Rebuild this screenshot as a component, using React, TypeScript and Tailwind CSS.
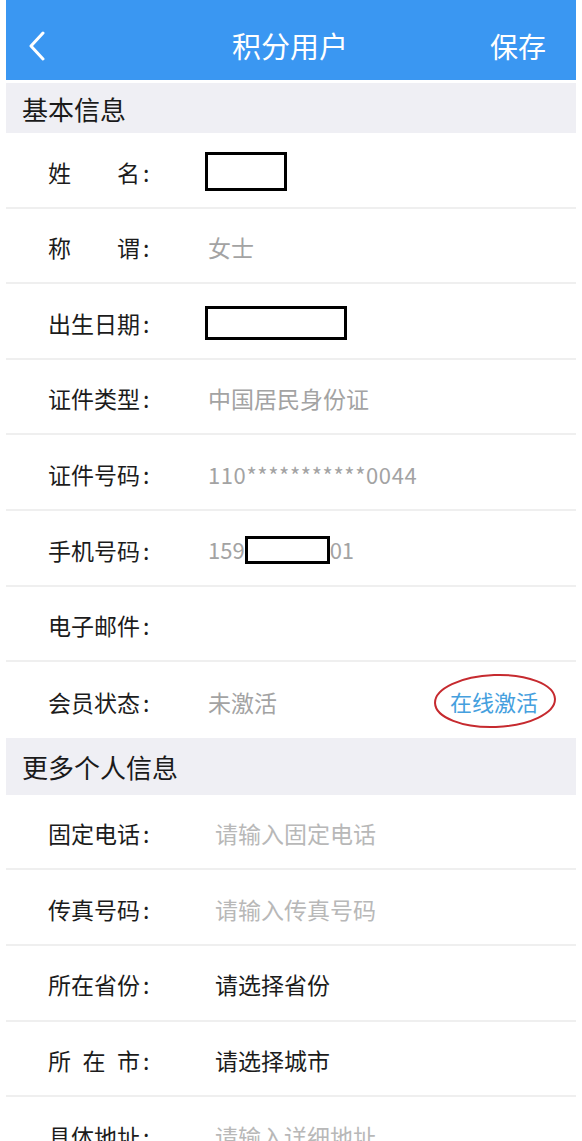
import type { ReactNode } from "react";

const FONT = {
  fontFamily: '"Noto Sans CJK SC", "Noto Sans", sans-serif',
};

function Label({ chars }: { chars: string[] }) {
  return (
    <div className="flex items-center text-[23px] text-[#1c1c1c]">
      <span className="flex w-[92px] justify-between">
        {chars.map((c, i) => (
          <span key={i}>{c}</span>
        ))}
      </span>
      <span className="ml-[3px]">:</span>
    </div>
  );
}

interface RowProps {
  chars: string[];
  valueLeft: string;
  children?: ReactNode;
  last?: boolean;
}

function Row({ chars, valueLeft, children, last = false }: RowProps) {
  return (
    <div
      className={`flex h-[75.6px] items-center pl-[42px] pt-[4px] ${
        last ? "" : "border-b-2 border-[#efefef]"
      }`}
    >
      <div className={valueLeft}>
        <Label chars={chars} />
      </div>
      <div className="flex flex-1 items-center">{children}</div>
    </div>
  );
}

function SectionTitle({ children, h }: { children: ReactNode; h: string }) {
  return (
    <div className={`flex items-center bg-[#efeff4] pl-[16px] text-[26px] text-[#1a1a1a] ${h}`}>
      {children}
    </div>
  );
}

function Redacted({ w, h }: { w: string; h: string }) {
  return <span className={`inline-block border-[3px] border-black bg-white ${w} ${h}`} />;
}

export default function App() {
  return (
    <div className="h-[1141px] overflow-hidden bg-white px-[6px]" style={FONT}>
      {/* nav bar */}
      <header className="flex h-[80px] items-center justify-between bg-[#3a97f2] pl-[22px] pr-[30px] pt-[12px] text-white">
        <svg width="18" height="30" viewBox="0 0 18 30">
          <path
            d="M15 2 L3 15 L15 28"
            fill="none"
            stroke="white"
            strokeWidth="3"
            strokeLinecap="round"
            strokeLinejoin="round"
          />
        </svg>
        <h1 className="ml-[44px] text-[29px] font-normal">积分用户</h1>
        <button className="text-[28px]">保存</button>
      </header>

      <div className="mt-[3px]">
        <SectionTitle h="h-[50px]">基本信息</SectionTitle>
        <Row chars={["姓", "名"]} valueLeft="w-[157px]">
          <Redacted w="w-[82px]" h="h-[39px]" />
        </Row>
        <Row chars={["称", "谓"]} valueLeft="w-[157px]">
          <span className="ml-[3px] text-[23px] text-[#a3a3a3]">女士</span>
        </Row>
        <Row chars={["出", "生", "日", "期"]} valueLeft="w-[157px]">
          <Redacted w="w-[142px]" h="h-[34px]" />
        </Row>
        <Row chars={["证", "件", "类", "型"]} valueLeft="w-[157px]">
          <span className="ml-[3px] text-[23px] text-[#a3a3a3]">中国居民身份证</span>
        </Row>
        <Row chars={["证", "件", "号", "码"]} valueLeft="w-[157px]">
          <span className="ml-[3px] text-[22px] tracking-[0.6px] text-[#a3a3a3]">
            110***********0044
          </span>
        </Row>
        <Row chars={["手", "机", "号", "码"]} valueLeft="w-[157px]">
          <span className="ml-[3px] text-[22px] text-[#a3a3a3]">159</span>
          <Redacted w="w-[85px]" h="h-[28px]" />
          <span className="text-[22px] text-[#a3a3a3]">01</span>
        </Row>
        <Row chars={["电", "子", "邮", "件"]} valueLeft="w-[157px]" />
        <Row chars={["会", "员", "状", "态"]} valueLeft="w-[157px]" last>
          <span className="ml-[3px] text-[23px] text-[#a3a3a3]">未激活</span>
          <span className="relative ml-auto mr-[38px] text-[22px] text-[#45a0de]">
            在线激活
            <svg
              className="absolute left-[-17px] top-[-13px]"
              width="124"
              height="58"
              viewBox="0 0 124 58"
            >
              <ellipse
                cx="62"
                cy="29"
                rx="60"
                ry="26"
                fill="none"
                stroke="#c62a2f"
                strokeWidth="2"
                transform="rotate(-2 62 29)"
              />
            </svg>
          </span>
        </Row>

        <SectionTitle h="h-[57px]">更多个人信息</SectionTitle>
        <Row chars={["固", "定", "电", "话"]} valueLeft="w-[167px]">
          <span className="text-[23px] text-[#b8b8b8]">请输入固定电话</span>
        </Row>
        <Row chars={["传", "真", "号", "码"]} valueLeft="w-[167px]">
          <span className="text-[23px] text-[#b8b8b8]">请输入传真号码</span>
        </Row>
        <Row chars={["所", "在", "省", "份"]} valueLeft="w-[167px]">
          <span className="text-[23px] text-[#1c1c1c]">请选择省份</span>
        </Row>
        <Row chars={["所", "在", "市"]} valueLeft="w-[167px]">
          <span className="text-[23px] text-[#1c1c1c]">请选择城市</span>
        </Row>
        <Row chars={["具", "体", "地", "址"]} valueLeft="w-[167px]">
          <span className="text-[23px] text-[#b8b8b8]">请输入详细地址</span>
        </Row>
      </div>
    </div>
  );
}
